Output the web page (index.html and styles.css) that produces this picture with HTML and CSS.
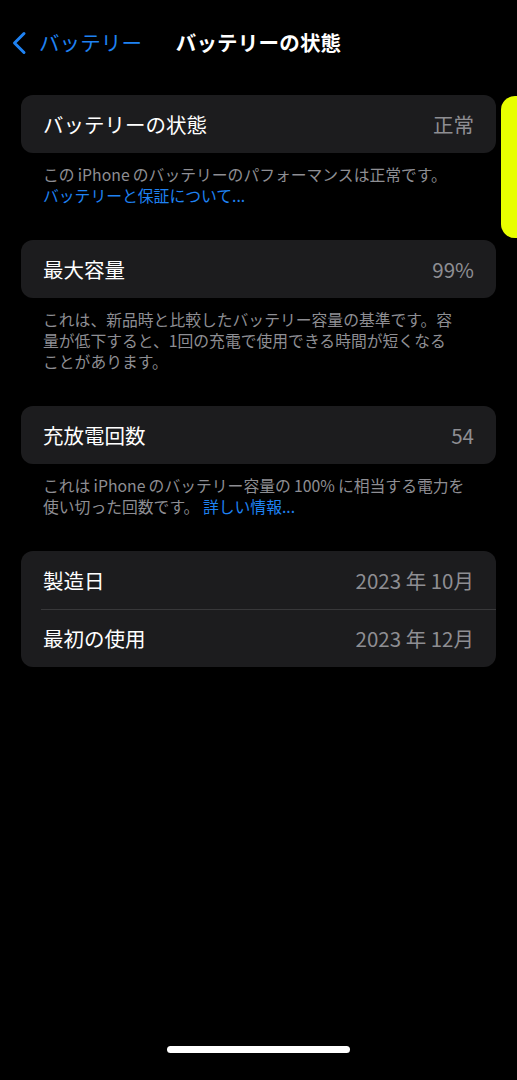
FILE: index.html
```html
<!DOCTYPE html>
<html lang="ja">
<head>
  <meta charset="UTF-8">
  <title>バッテリーの状態</title>
  <link rel="stylesheet" href="styles.css">
</head>
<body>
  <div class="screen">
    <header class="navbar">
      <a class="back" href="#">
        <svg class="chevron" width="16" height="24" viewBox="0 0 16 24">
          <path d="M13 2.5 L3.5 12 L13 21.5" fill="none" stroke="currentColor" stroke-width="3" stroke-linecap="round" stroke-linejoin="round"/>
        </svg>
        <span>バッテリー</span>
      </a>
      <h1 class="title">バッテリーの状態</h1>
      <div></div>
    </header>

    <main class="content">
      <section class="group">
        <div class="card">
          <div class="row"><span class="label">バッテリーの状態</span><span class="value">正常</span></div>
        </div>
        <p class="footer">この&thinsp;iPhone&thinsp;のバッテリーのパフォーマンスは正常です。<br><a href="#">バッテリーと保証について...</a></p>
      </section>

      <section class="group">
        <div class="card">
          <div class="row"><span class="label">最大容量</span><span class="value">99%</span></div>
        </div>
        <p class="footer">これは、新品時と比較したバッテリー容量の基準です。容<br>量が低下すると、1回の充電で使用できる時間が短くなる<br>ことがあります。</p>
      </section>

      <section class="group">
        <div class="card">
          <div class="row"><span class="label">充放電回数</span><span class="value">54</span></div>
        </div>
        <p class="footer">これは&thinsp;iPhone&thinsp;のバッテリー容量の&thinsp;100%&thinsp;に相当する電力を<br>使い切った回数です。 <a href="#">詳しい情報...</a></p>
      </section>

      <section class="group">
        <div class="card">
          <div class="row"><span class="label">製造日</span><span class="value">2023 年 10月</span></div>
          <div class="row"><span class="label">最初の使用</span><span class="value">2023 年 12月</span></div>
        </div>
      </section>
    </main>

    <div class="side-tab"></div>
    <div class="home-indicator"></div>
  </div>
</body>
</html>
```

FILE: styles.css
```css
body {
  margin: 0;
  padding: 0;
  background-color: #000;
  font-family: "Noto Sans CJK JP", "Noto Sans", sans-serif;
  color: #fff;
}
.screen {
  position: relative;
  min-height: 1080px;
  display: flex;
  flex-direction: column;
  overflow: hidden;
}
.navbar {
  height: 84px;
  display: grid;
  grid-template-columns: 1fr auto 1fr;
  align-items: center;
}
.back {
  display: flex;
  align-items: center;
  gap: 12px;
  padding-left: 11px;
  color: #1f82f2;
  text-decoration: none;
  font-size: 20.5px;
  letter-spacing: 0.1px;
}
.chevron {
  display: block;
  margin-top: 2px;
}
.title {
  margin: 0;
  font-size: 20.5px;
  font-weight: bold;
  letter-spacing: 0.2px;
}
.content {
  padding: 11px 21px 0 21px;
}
.group {
  margin-bottom: 34px;
}
.card {
  background: #1c1c1e;
  border-radius: 12px;
  overflow: hidden;
}
.row {
  height: 58px;
  display: flex;
  align-items: center;
  justify-content: space-between;
  padding: 0 22px;
  font-size: 20.5px;
  position: relative;
}
.row + .row::before {
  content: "";
  position: absolute;
  top: 0;
  left: 20px;
  right: 0;
  height: 1px;
  background: #38383a;
}
.label {
  color: #fff;
}
.value {
  color: #8e8e93;
}
.footer {
  margin: 0;
  padding: 11px 22px 0 22px;
  font-size: 15.8px;
  line-height: 21px;
  color: #8e8e93;
}
.footer a {
  color: #1f82f2;
  text-decoration: none;
}
.side-tab {
  position: absolute;
  top: 96px;
  right: 0;
  width: 16px;
  height: 142px;
  background: #e8ff00;
  border-radius: 14px 0 0 14px;
}
.home-indicator {
  margin: auto auto 27px auto;
  width: 183px;
  height: 7px;
  border-radius: 4px;
  background: #fff;
}
```
